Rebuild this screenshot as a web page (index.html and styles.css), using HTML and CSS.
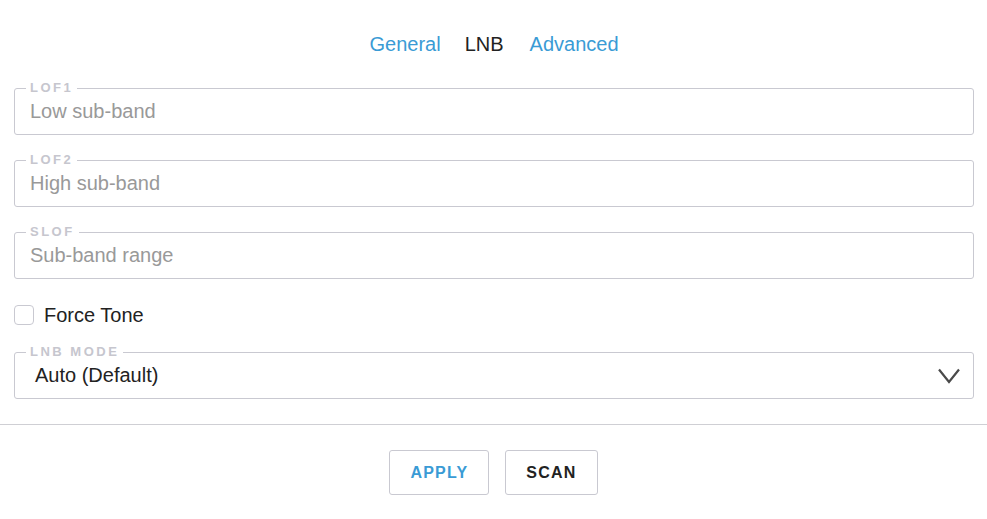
FILE: index.html
```html
<!DOCTYPE html>
<html lang="en">
<head>
<meta charset="utf-8">
<title>LNB</title>
<link rel="stylesheet" href="styles.css">
</head>
<body>
  <nav class="tabs">
    <a class="tab">General</a>
    <a class="tab active">LNB</a>
    <a class="tab">Advanced</a>
  </nav>
  <form class="form">
    <div class="field">
      <span class="legend">LOF1</span>
      <input class="input" type="text" placeholder="Low sub-band">
    </div>
    <div class="field">
      <span class="legend">LOF2</span>
      <input class="input" type="text" placeholder="High sub-band">
    </div>
    <div class="field">
      <span class="legend">SLOF</span>
      <input class="input" type="text" placeholder="Sub-band range">
    </div>
    <label class="check-row">
      <span class="checkbox"></span>
      <span class="check-label">Force Tone</span>
    </label>
    <div class="field field-select">
      <span class="legend">LNB MODE</span>
      <span class="select-value">Auto (Default)</span>
      <svg class="chevron" width="22" height="16" viewBox="0 0 22 16"><path d="M1 1.5 L11 14 L21 1.5" fill="none" stroke="#4a4a4a" stroke-width="2.2"/></svg>
    </div>
  </form>
  <hr class="divider">
  <div class="actions">
    <button class="btn btn-primary" type="button">APPLY</button>
    <button class="btn" type="button">SCAN</button>
  </div>
</body>
</html>
```
FILE: styles.css
```css
* { box-sizing: border-box; }
html, body { margin: 0; padding: 0; background: #fff; }
body {
  font-family: "Liberation Sans", Arial, sans-serif;
  font-size: 20px;
  color: #222;
  width: 987px;
  height: 519px;
  overflow: hidden;
}
.tabs {
  display: flex;
  justify-content: center;
  gap: 26px;
  padding-top: 33px;
  padding-left: 1px;
  line-height: 23px;
}
.tab { color: #3a9bd5; text-decoration: none; }
.tab.active { color: #222; margin-left: -2px; }
.form {
  padding: 0 13px 0 14px;
  display: flex;
  flex-direction: column;
  margin-top: 32px;
}
.field {
  position: relative;
  height: 47px;
  border: 1px solid #c9c9d1;
  border-radius: 3px;
  display: flex;
  align-items: center;
  margin-bottom: 25px;
}
.legend {
  position: absolute;
  top: -8px;
  left: 11px;
  padding: 0 4px;
  background: #fff;
  font-size: 13px;
  line-height: 14px;
  font-weight: bold;
  letter-spacing: 2.5px;
  color: #c6c6ce;
}
.input {
  border: 0;
  outline: 0;
  background: transparent;
  width: 100%;
  height: 100%;
  padding: 0 15px;
  font: inherit;
  color: #222;
}
.input::placeholder { color: #999; opacity: 1; }
.check-row {
  display: flex;
  align-items: center;
  gap: 10px;
  height: 20px;
  margin-top: 1px;
  margin-bottom: 27px;
}
.checkbox {
  width: 20px;
  height: 20px;
  border: 1px solid #c9c9d1;
  border-radius: 4px;
}
.field-select {
  justify-content: space-between;
  padding: 0 13px 0 20px;
  margin-bottom: 0;
}
.chevron { display: block; }
.divider {
  border: 0;
  border-top: 1px solid #cfcfd4;
  margin: 25px 0 0;
  height: 0;
}
.actions {
  display: flex;
  justify-content: center;
  gap: 16px;
  margin-top: 25px;
}
.btn {
  height: 45px;
  padding: 0 20px;
  border: 1px solid #c9c9d1;
  border-radius: 3px;
  background: #fff;
  font-family: "Liberation Sans", Arial, sans-serif;
  font-size: 16px;
  font-weight: bold;
  letter-spacing: 1.2px;
  color: #222;
}
.btn-primary { color: #3a9bd5; }
```
